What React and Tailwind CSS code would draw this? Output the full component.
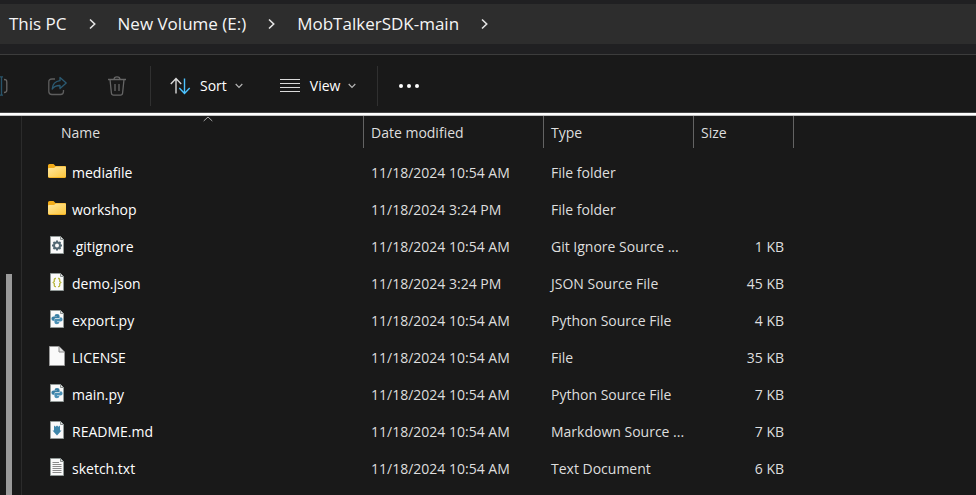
import React from "react";

const files = [
  { name: "mediafile", date: "11/18/2024 10:54 AM", type: "File folder", size: "", icon: "folder" },
  { name: "workshop", date: "11/18/2024 3:24 PM", type: "File folder", size: "", icon: "folder" },
  { name: ".gitignore", date: "11/18/2024 10:54 AM", type: "Git Ignore Source ...", size: "1 KB", icon: "gear" },
  { name: "demo.json", date: "11/18/2024 3:24 PM", type: "JSON Source File", size: "45 KB", icon: "json" },
  { name: "export.py", date: "11/18/2024 10:54 AM", type: "Python Source File", size: "4 KB", icon: "python" },
  { name: "LICENSE", date: "11/18/2024 10:54 AM", type: "File", size: "35 KB", icon: "blank" },
  { name: "main.py", date: "11/18/2024 10:54 AM", type: "Python Source File", size: "7 KB", icon: "python" },
  { name: "README.md", date: "11/18/2024 10:54 AM", type: "Markdown Source ...", size: "7 KB", icon: "markdown" },
  { name: "sketch.txt", date: "11/18/2024 10:54 AM", type: "Text Document", size: "6 KB", icon: "text" },
];

function FolderIcon() {
  return (
    <svg width="18" height="20" viewBox="0 0 18 20" className="mb-1 shrink-0" aria-hidden="true">
      <defs>
        <linearGradient id="folderFront" x1="0" y1="0" x2="1" y2="1">
          <stop offset="0" stopColor="#ffe8a0" />
          <stop offset="1" stopColor="#fcc63c" />
        </linearGradient>
      </defs>
      <g transform="translate(0 1)">
        <path d="M0 3.5Q0 2 1.5 2H5.5L7.5 4H17Q18 4 18 5V14.5Q18 16 16.5 16H1.5Q0 16 0 14.5Z" fill="#f3ac18" />
        <path d="M0 7Q0 6 1 6H6L8 4.6H17Q18 4.6 18 5.6V14Q18 15.2 16.8 15.2H1.2Q0 15.2 0 14Z" fill="url(#folderFront)" />
      </g>
    </svg>
  );
}

function PythonMark() {
  return (
    <>
      <path d="M5.5 7.3Q5.5 5 8 5Q10.6 5 10.6 7V9.2H6.5Q5.5 9.2 5.5 10.3V11.8H4.2Q2.4 11.8 2.4 9.6Q2.4 7.6 4.5 7.6H8V7.2H5.5Z" fill="#397fa4" />
      <path d="M10.5 12.8Q10.5 15.2 8 15.2Q5.4 15.2 5.4 13.2V11Q5.4 10 6.4 10H9.8Q11.4 10 11.4 8.3H12Q13.6 8.5 13.6 10.5Q13.6 12.6 11.5 12.6H8V13H10.5Z" fill="#4b91b6" />
    </>
  );
}

function FileIcon({ kind }) {
  if (kind === "folder") return <FolderIcon />;
  const large = kind === "blank";
  return (
    <svg width="18" height="20" viewBox="0 0 18 20" className="mb-1 shrink-0" aria-hidden="true">
      {large ? (
        <>
          <path d="M1.5 .5H11L16.5 6V19.5H1.5Z" fill="#fafafa" stroke="#9a9a9a" />
          <path d="M11 .8V6H16.2" fill="#e2e2e2" stroke="#8a8a8a" />
        </>
      ) : (
        <>
          <path d="M2.5 1.5H12.5L15.5 4.5V18.5H2.5Z" fill="#fafafa" stroke="#929a98" />
          <path d="M12.5 1.8V4.5H15.2" fill="#e2e2e2" stroke="#8a908f" />
        </>
      )}
      {kind === "gear" && (
        <g stroke="#536974" fill="none">
          <circle cx="9" cy="10.5" r="3" strokeWidth="2" />
          <path
            d="M9 5.5V7M9 14V15.5M4 10.5H5.5M12.5 10.5H14M5.5 7L6.6 8.1M11.4 12.9L12.5 14M12.5 7L11.4 8.1M6.6 12.9L5.5 14"
            strokeWidth="2"
          />
        </g>
      )}
      {kind === "json" && (
        <g stroke="#b9b840" fill="none" strokeWidth="1.3">
          <path d="M8 6.5H7.3Q6.3 6.5 6.3 7.5V9.5L5.2 10.5L6.3 11.5V13.6Q6.3 14.6 7.3 14.6H8" />
          <path d="M10 6.5H10.7Q11.7 6.5 11.7 7.5V9.5L12.8 10.5L11.7 11.5V13.6Q11.7 14.6 10.7 14.6H10" />
        </g>
      )}
      {kind === "python" && (
        <g transform="translate(1 0)">
          <PythonMark />
        </g>
      )}
      {kind === "markdown" && (
        <path d="M6 5.5L7.5 6.8L9 5.5L10.5 6.8L12 5.5V10.5H13.5L9 15.5L4.5 10.5H6Z" fill="#3f87ab" />
      )}
      {kind === "text" && (
        <path d="M4.5 5.5H11M4.5 7.5H13.5M4.5 9.5H13.5M4.5 11.5H13.5M4.5 13.5H13.5M4.5 15.5H13.5" stroke="#8b8b8b" />
      )}
    </svg>
  );
}

function CrumbChevron() {
  return (
    <svg width="7" height="12" viewBox="0 0 7 12" fill="none" stroke="#e4e4e4" strokeWidth="1.6" className="shrink-0" aria-hidden="true">
      <path d="M1 1.5L5.7 6L1 10.5" />
    </svg>
  );
}

function DropChevron() {
  return (
    <svg width="8" height="6" viewBox="0 0 8 6" fill="none" stroke="#b5b5b5" strokeWidth="1.2" aria-hidden="true">
      <path d="M.7 1L4 4.3L7.3 1" />
    </svg>
  );
}

function Breadcrumb() {
  return (
    <nav aria-label="Path" className="flex h-10 items-center gap-[22px] bg-[#2d2d2d] pl-[9px] text-[17px] text-[#f5f5f5]">
      <a href="#pc" className="whitespace-nowrap">This PC</a>
      <CrumbChevron />
      <a href="#volume" className="whitespace-nowrap">New Volume (E:)</a>
      <CrumbChevron />
      <a href="#folder" className="whitespace-nowrap">MobTalkerSDK-main</a>
      <CrumbChevron />
    </nav>
  );
}

function Toolbar() {
  return (
    <div className="flex h-[59px] items-center border-y border-t-[#3c3c3c] border-b-[#444] bg-[#191919] pt-1 text-[14px] text-white">
      <button aria-label="Rename" className="flex w-12 items-center">
        <svg width="8" height="20" viewBox="0 0 8 20" fill="none" strokeWidth="1.3" aria-hidden="true">
          <path d="M0 .8H3M1.5 .8V19.2M0 19.2H3" stroke="#28546a" />
          <path d="M4 3.5Q6.8 3.5 6.8 6V14Q6.8 16.5 4 16.5" stroke="#666" />
        </svg>
      </button>
      <button aria-label="Share" className="flex w-[60px] items-center">
        <svg width="19" height="20" viewBox="0 0 19 20" fill="none" strokeWidth="1.3" strokeLinejoin="round" aria-hidden="true">
          <path d="M7 3H4Q.8 3 .8 6V15.5Q.8 18.5 4 18.5H12.5Q15.5 18.5 15.5 15.5V14" stroke="#5e5e5e" />
          <path d="M12 1.5L18.2 7L12 12.5V9.5Q7 9.3 4.2 13Q4.8 5.5 12 4.7Z" stroke="#2b5a72" />
        </svg>
      </button>
      <button aria-label="Delete" className="flex w-[42px] items-center">
        <svg width="18" height="20" viewBox="0 0 18 20" fill="none" stroke="#666" strokeWidth="1.3" aria-hidden="true">
          <path d="M0 3.5H18M6 3.5Q6 .8 9 .8Q12 .8 12 3.5M2 3.5L3.4 17Q3.6 19.2 5.6 19.2H12.4Q14.4 19.2 14.6 17L16 3.5M7 8V15M11 8V15" />
        </svg>
      </button>
      <div className="h-10 w-px bg-[#303030]" />
      <button className="ml-[19px] flex items-center gap-2">
        <svg width="22" height="18" viewBox="0 0 22 18" fill="none" strokeWidth="1.4" aria-hidden="true">
          <path d="M6 16.5V1.5M.8 7L6 1.5L11.2 7" stroke="#d8d8d8" />
          <path d="M14.5 1.5V16.5M9.3 11L14.5 16.5L19.7 11" stroke="#4cc2ff" />
        </svg>
        Sort
        <DropChevron />
      </button>
      <button className="ml-[37px] flex items-center gap-2">
        <svg width="22" height="14" viewBox="0 0 22 14" fill="none" stroke="#dadada" aria-hidden="true">
          <path d="M0 .5H20M0 4.5H20M0 8.5H20M0 12.5H20" />
        </svg>
        View
        <DropChevron />
      </button>
      <div className="ml-[21px] h-10 w-px bg-[#303030]" />
      <button aria-label="See more" className="ml-5">
        <svg width="22" height="6" viewBox="0 0 22 6" fill="white" aria-hidden="true">
          <circle cx="3" cy="3" r="2" />
          <circle cx="11" cy="3" r="2" />
          <circle cx="19" cy="3" r="2" />
        </svg>
      </button>
    </div>
  );
}

function FileTable() {
  return (
    <table className="w-[770px] table-fixed border-separate border-spacing-0 text-left text-[14px] leading-5 text-[#dedede]">
      <colgroup>
        <col className="w-[340px]" />
        <col className="w-[180px]" />
        <col className="w-[150px]" />
        <col className="w-[100px]" />
      </colgroup>
      <thead>
        <tr className="h-8 *:border-r *:border-[#636363] *:p-0 *:pt-[2px] *:font-normal">
          <th className="relative">
            <span className="pl-[37px]">Name</span>
            <svg width="10" height="6" viewBox="0 0 10 6" fill="none" stroke="#a8a8a8" className="absolute top-0 left-[179px]" aria-hidden="true">
              <path d="M.7 5L5 1L9.3 5" />
            </svg>
          </th>
          <th><span className="pl-[7px]">Date modified</span></th>
          <th><span className="pl-[7px]">Type</span></th>
          <th><span className="pl-[7px]">Size</span></th>
        </tr>
      </thead>
      <tbody className="before:block before:h-[6px] before:content-['']">
        {files.map((f) => (
          <tr key={f.name} className="h-[37px] *:p-0 *:whitespace-nowrap">
            <td>
              <a href="#file" className="flex items-center gap-[6px] pl-6 text-white">
                <FileIcon kind={f.icon} />
                {f.name}
              </a>
            </td>
            <td><span className="pl-[7px]">{f.date}</span></td>
            <td><span className="pl-[7px]">{f.type}</span></td>
            <td className="text-right"><span className="pr-[10px]">{f.size}</span></td>
          </tr>
        ))}
      </tbody>
    </table>
  );
}

export default function App() {
  return (
    <div className="flex min-h-screen flex-col bg-[#202022] pt-1 font-['Segoe_UI','Open_Sans','Noto_Sans',sans-serif]">
      <Breadcrumb />
      <div className="h-[10px]" />
      <Toolbar />
      <div className="h-[2px] bg-white" />
      <main className="flex flex-1 border-t border-[#c4c4c4] bg-[#191919]">
        <aside className="flex w-[22px] shrink-0 flex-col border-r border-[#2b2b2b] pl-[6px]">
          <div className="h-[158px]" />
          <div className="w-[6px] flex-1 bg-[#9a9a9a]" />
        </aside>
        <div className="min-w-0 flex-1 pl-[2px]">
          <FileTable />
        </div>
      </main>
    </div>
  );
}
